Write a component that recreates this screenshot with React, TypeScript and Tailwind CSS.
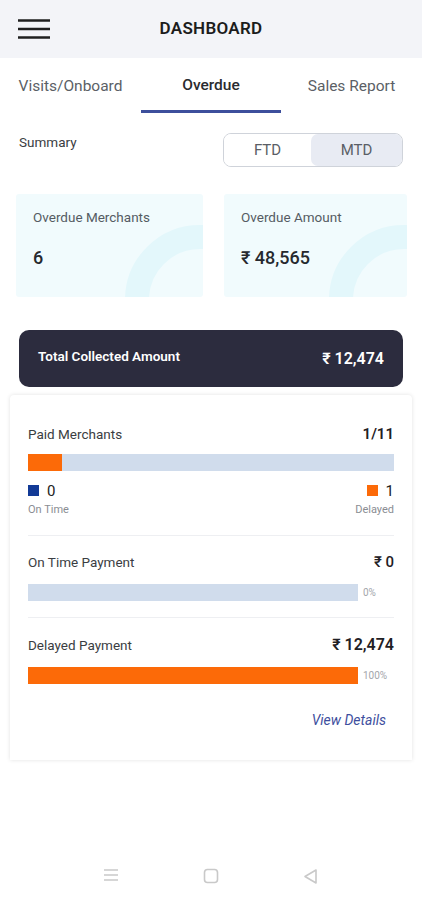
// Faixa de progresso simples, largura vem dos dados.
function Bar({ pct, fill, track = "bg-[#d0dcec]" }: { pct: number; fill: string; track?: string }) {
  return (
    <div className={`h-[17px] flex-1 ${track}`}>
      <div className={`h-full ${fill}`} style={{ width: `${pct}%` }} />
    </div>
  );
}

function StatCard({ title, value }: { title: string; value: string }) {
  return (
    <div className="relative h-[103px] overflow-hidden rounded-[3px] bg-[#f1fbfd] px-[17px] pt-[13px]">
      <div className="absolute -bottom-[78px] -right-[72px] h-[150px] w-[150px] rounded-full border-[24px] border-[#e3f7fb]" />
      <p className="relative text-[13.5px] text-[#555b63]">{title}</p>
      <p className="relative mt-[17px] text-[18px] font-medium text-[#26292e]">{value}</p>
    </div>
  );
}

export default function App() {
  return (
    <div className="flex h-[900px] w-[422px] flex-col bg-white font-['Roboto',sans-serif]">
      {/* cabecalho */}
      <header className="flex h-[58px] items-center bg-[#f3f4f8] px-[18px]">
        <svg width="32" height="22" viewBox="0 0 32 22" fill="none" stroke="#1f1f1f" strokeWidth="2.4">
          <path d="M0 2.5h32M0 11h32M0 19.5h32" />
        </svg>
        <h1 className="flex-1 pr-[32px] text-center text-[17px] font-semibold tracking-[0.3px] text-[#1c1c1c]">
          DASHBOARD
        </h1>
      </header>

      {/* abas */}
      <nav className="flex h-[55px] items-stretch text-[15.5px]">
        <div className="flex w-[141px] items-center justify-center pt-[3px] text-[#5b5f66]">Visits/Onboard</div>
        <div className="flex w-[140px] items-center justify-center border-b-[3px] border-[#3d4f9c] pt-[3px] font-medium text-[#2a2b2f]">
          Overdue
        </div>
        <div className="flex flex-1 items-center justify-center pt-[3px] text-[#5b5f66]">Sales Report</div>
      </nav>

      {/* resumo */}
      <div className="mt-[20px] flex items-start justify-between px-[19px]">
        <span className="-mt-[1px] text-[13.5px] text-[#3a3d42]">Summary</span>
        <div className="flex h-[34px] w-[180px] overflow-hidden rounded-[8px] border border-[#cfd3da] text-[15px] text-[#5a5e66]">
          <div className="flex flex-1 items-center justify-center bg-white">FTD</div>
          <div className="flex w-[91px] items-center justify-center rounded-[7px] bg-[#e8ebf3]">MTD</div>
        </div>
      </div>

      <div className="mt-[27px] grid grid-cols-[187px_183px] justify-between pl-[16px] pr-[15px]">
        <StatCard title="Overdue Merchants" value="6" />
        <StatCard title="Overdue Amount" value="₹ 48,565" />
      </div>

      {/* total coletado */}
      <div className="mx-[19px] mt-[33px] flex h-[57px] items-center justify-between rounded-[10px] bg-[#2c2c3e] px-[19px] text-white">
        <span className="mb-[4px] text-[13.5px] font-semibold">Total Collected Amount</span>
        <span className="text-[16px] font-semibold">₹ 12,474</span>
      </div>

      <div className="mx-[10px] mt-[8px] h-[365px] rounded-t-[4px] bg-white px-[18px] pt-[28px] shadow-[0_0_4px_rgba(0,0,0,0.12)]">
        <div className="flex items-center justify-between">
          <span className="text-[13.5px] text-[#3a3d42]">Paid Merchants</span>
          <span className="text-[15px] font-semibold text-[#1f2024]">1/11</span>
        </div>
        <div className="mt-[8px] flex">
          <Bar pct={9.3} fill="bg-[#fc6a08]" />
        </div>
        <div className="mt-[9px] flex justify-between">
          <div>
            <div className="flex items-center gap-[8px]">
              <span className="h-[11px] w-[11px] bg-[#123a96]" />
              <span className="text-[15px] text-[#222]">0</span>
            </div>
            <p className="text-[11px] text-[#8a8d93]">On Time</p>
          </div>
          <div className="flex flex-col items-end">
            <div className="flex items-center gap-[8px]">
              <span className="h-[11px] w-[11px] bg-[#fc6a08]" />
              <span className="text-[15px] text-[#222]">1</span>
            </div>
            <p className="text-[11px] text-[#8a8d93]">Delayed</p>
          </div>
        </div>

        <div className="mt-[16px] border-t border-[#eeeff2]" />

        <div className="mt-[15px] flex items-center justify-between">
          <span className="text-[13.5px] text-[#3a3d42]">On Time Payment</span>
          <span className="text-[15px] font-medium text-[#1f2024]">₹ 0</span>
        </div>
        <div className="mt-[11px] flex items-center gap-[5px]">
          <Bar pct={0} fill="bg-[#fc6a08]" />
          <span className="w-[31px] text-[10px] text-[#a3a6ab]">0%</span>
        </div>

        <div className="mt-[16px] border-t border-[#eeeff2]" />

        <div className="mt-[15px] flex items-center justify-between">
          <span className="text-[13.5px] text-[#3a3d42]">Delayed Payment</span>
          <span className="text-[16px] font-semibold text-[#1f2024]">₹ 12,474</span>
        </div>
        <div className="mt-[10px] flex items-center gap-[5px]">
          <Bar pct={100} fill="bg-[#fc6a08]" />
          <span className="w-[31px] text-[10px] text-[#a3a6ab]">100%</span>
        </div>

        <div className="mt-[26px] flex justify-end pr-[8px]">
          <span className="text-[14px] italic text-[#3e4f9e]">View Details</span>
        </div>
      </div>

      {/* barra de navegacao do sistema */}
      <div className="mt-auto flex h-[60px] items-start justify-center gap-[82px] pt-[27px] text-[#c9c9c9]">
        <svg width="18" height="16" viewBox="0 0 18 16" fill="none" stroke="currentColor" strokeWidth="1.5">
          <path d="M2 3h14M2 8h14M2 13h14" />
        </svg>
        <svg width="18" height="18" viewBox="0 0 18 18" fill="none" stroke="currentColor" strokeWidth="1.6">
          <rect x="2.5" y="2.5" width="13" height="13" rx="3" />
        </svg>
        <svg width="18" height="18" viewBox="0 0 18 18" fill="none" stroke="currentColor" strokeWidth="1.6" strokeLinejoin="round">
          <path d="M14 3v13L3 9.5z" />
        </svg>
      </div>
    </div>
  );
}
